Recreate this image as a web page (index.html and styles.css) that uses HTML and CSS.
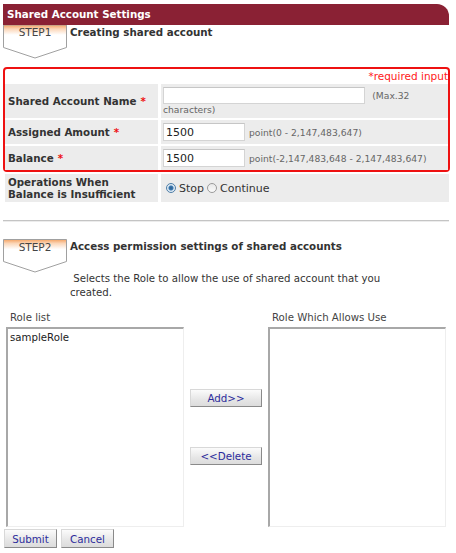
FILE: index.html
```html
<!DOCTYPE html>
<html>
<head>
<meta charset="utf-8">
<link rel="stylesheet" href="styles.css">
</head>
<body>
<div class="page">
  <div class="header">Shared Account Settings</div>

  <div class="step-row step1">
    <div class="tab">
      <svg class="tab-shape" width="64" height="34" viewBox="0 0 64 34">
        <defs>
          <linearGradient id="g1" x1="0" y1="0" x2="0" y2="1">
            <stop offset="0" stop-color="#f4a262"/>
            <stop offset="0.12" stop-color="#fbd6b8"/>
            <stop offset="0.3" stop-color="#ffffff"/>
          </linearGradient>
        </defs>
        <polygon points="0.5,0 0.5,22.5 32,33 63.5,22.5 63.5,0" fill="url(#g1)" stroke="#a0a0a0" stroke-width="1"/>
      </svg>
      <span class="tab-label">STEP1</span>
    </div>
    <div class="step-title">Creating shared account</div>
  </div>

  <div class="required-box">
    <div class="required-note">*required input</div>
    <div class="form-grid">
      <div class="label">Shared Account Name <span class="star">*</span></div>
      <div class="value name-value">
        <input class="text-input wide" type="text" value=""> <span class="hint">(Max.32</span><br><span class="hint">characters)</span>
      </div>
      <div class="label">Assigned Amount <span class="star">*</span></div>
      <div class="value">
        <input class="text-input short" type="text" value="1500"> <span class="hint">point(0 - 2,147,483,647)</span>
      </div>
      <div class="label">Balance <span class="star">*</span></div>
      <div class="value">
        <input class="text-input short" type="text" value="1500"> <span class="hint">point(-2,147,483,648 - 2,147,483,647)</span>
      </div>
    </div>
  </div>

  <div class="form-grid extra">
    <div class="label two-line">Operations When<br>Balance is Insufficient</div>
    <div class="value radios">
      <label class="radio"><span class="dot checked"></span>Stop</label>
      <label class="radio"><span class="dot"></span>Continue</label>
    </div>
  </div>

  <div class="divider"></div>

  <div class="step-row step2">
    <div class="tab">
      <svg class="tab-shape" width="64" height="34" viewBox="0 0 64 34">
        <defs>
          <linearGradient id="g2" x1="0" y1="0" x2="0" y2="1">
            <stop offset="0" stop-color="#f4a262"/>
            <stop offset="0.12" stop-color="#fbd6b8"/>
            <stop offset="0.3" stop-color="#ffffff"/>
          </linearGradient>
        </defs>
        <polygon points="0.5,0.5 0.5,22.5 32,33 63.5,22.5 63.5,0.5" fill="url(#g2)" stroke="#a0a0a0" stroke-width="1"/>
      </svg>
      <span class="tab-label">STEP2</span>
    </div>
    <div class="step-title">Access permission settings of shared accounts</div>
  </div>

  <p class="desc">&nbsp;Selects the Role to allow the use of shared account that you created.</p>

  <div class="roles">
    <div class="role-col">
      <div class="role-title">Role list</div>
      <div class="listbox"><div class="option">sampleRole</div></div>
    </div>
    <div class="mid">
      <button class="btn move add">Add&gt;&gt;</button>
      <button class="btn move del">&lt;&lt;Delete</button>
    </div>
    <div class="role-col">
      <div class="role-title">Role Which Allows Use</div>
      <div class="listbox"></div>
    </div>
  </div>

  <div class="actions">
    <button class="btn submit">Submit</button>
    <button class="btn cancel">Cancel</button>
  </div>
</div>
</body>
</html>
```
FILE: styles.css
```css
html, body {
  margin: 0;
  padding: 0;
  background: #ffffff;
}
body {
  font-family: "DejaVu Sans", Verdana, sans-serif;
  font-size: 10.2px;
  color: #333333;
}
.page {
  width: 456px;
  padding-top: 4px;
}
.header {
  margin-left: 3px;
  width: 442px;
  height: 21px;
  line-height: 21px;
  padding-left: 4px;
  background: #8a2134;
  border-top-right-radius: 12px;
  color: #ffffff;
  font-weight: bold;
  font-size: 10.3px;
}
.step-row {
  display: flex;
  align-items: flex-start;
  margin-left: 3px;
}
.tab {
  display: grid;
  width: 64px;
  height: 34px;
}
.tab-shape, .tab-label {
  grid-area: 1 / 1;
}
.tab-label {
  justify-self: center;
  align-self: start;
  margin-top: 2px;
  font-size: 10.5px;
  color: #444;
  z-index: 1;
}
.step-title {
  margin-left: 3px;
  margin-top: 1px;
  font-weight: bold;
  font-size: 10.3px;
  color: #333;
}
.step1 .tab-label { margin-top: 1px; }
.step1 .step-title { margin-top: 1px; }

.required-box {
  margin: 8px 0 0 3px;
  width: 443px;
  border: 2px solid #ee1111;
  border-radius: 4px;
}
.required-note {
  text-align: right;
  color: #ff2020;
  font-size: 10.5px;
  line-height: 15px;
}
.form-grid {
  display: grid;
  grid-template-columns: 153px 1fr;
  column-gap: 3px;
  row-gap: 2px;
}
.label {
  background: #ececec;
  font-weight: bold;
  font-size: 10.3px;
  display: flex;
  align-items: center;
  padding-left: 3px;
  line-height: 12px;
}
.star {
  color: #ee1111;
  margin-left: 4px;
}
.value {
  background: #ececec;
  padding: 2px 0 2px 2px;
  height: 20px;
  display: flex;
  align-items: center;
}
.name-value {
  display: block;
  height: 29px;
  padding-top: 3px;
  line-height: 11px;
}
.text-input {
  box-sizing: border-box;
  height: 18px;
  border: 1px solid #d4d4d4;
  border-top-color: #c6c6c6;
  background: #fff;
  font-family: "DejaVu Sans", Verdana, sans-serif;
  font-size: 11px;
  color: #222;
  padding: 0 2px;
  margin: 0;
  vertical-align: middle;
}
.text-input.wide { width: 202px; height: 17px; }
.text-input.short { width: 82px; }
.hint {
  font-size: 9.2px;
  color: #666;
  margin-left: 4px;
}
.name-value .hint:last-child { margin-left: 0; }
.name-value .wide + .hint { vertical-align: middle; }

.extra {
  margin: 2px 0 0 5px;
  width: 444px;
}
.two-line {
  height: 28px;
  line-height: 12px;
}
.radios {
  height: 24px;
  padding-left: 5px;
  font-size: 11px;
}
.radio {
  display: inline-flex;
  align-items: center;
  margin-right: 3px;
}
.dot {
  box-sizing: border-box;
  width: 10px;
  height: 10px;
  border-radius: 50%;
  border: 1px solid #9a9a9a;
  background: linear-gradient(#e8e8e8, #fafafa);
  margin-right: 3px;
  position: relative;
}
.dot.checked {
  border-color: #4d7ea8;
  background: radial-gradient(circle, #2a5f8f 0, #3b78b0 2px, #d8e6f2 3px, #f0f0f0 5px);
}

.divider {
  margin: 18px 0 0 3px;
  width: 446px;
  height: 1px;
  background: #c4c4c4;
  border-bottom: 1px solid #ececec;
}
.step2 {
  margin-top: 17px;
}
.desc {
  margin: -1px 0 0 70px;
  width: 315px;
  line-height: 14px;
  color: #333;
}
.roles {
  display: flex;
  margin: 11px 0 0 6px;
}
.role-col {
  width: 178px;
}
.role-title {
  padding-left: 4px;
  line-height: 14px;
  color: #444;
  margin-bottom: 2px;
}
.listbox {
  box-sizing: border-box;
  height: 200px;
  border: 1px solid #eeeeee;
  border-top: 2px solid #a8a8a8;
  border-left: 2px solid #a8a8a8;
  background: #fff;
  padding: 2px 2px;
}
.option {
  line-height: 14px;
  color: #222;
}
.mid {
  width: 84px;
  display: flex;
  flex-direction: column;
  align-items: center;
  padding-top: 78px;
}
.btn {
  box-sizing: border-box;
  font-family: "DejaVu Sans", Verdana, sans-serif;
  font-size: 10.3px;
  color: #2c2c9c;
  background: linear-gradient(#fbfbfb, #e6e6e6 60%, #dcdcdc);
  border: 1px solid #d8d8d8;
  border-right-color: #8a8a8a;
  border-bottom-color: #8a8a8a;
  padding: 0;
  margin: 0;
}
.btn.move {
  width: 72px;
  height: 18px;
}
.btn.del {
  margin-top: 40px;
}
.actions {
  display: flex;
  gap: 4px;
  margin: 2px 0 0 4px;
}
.btn.submit, .btn.cancel {
  width: 53px;
  height: 19px;
}
```
